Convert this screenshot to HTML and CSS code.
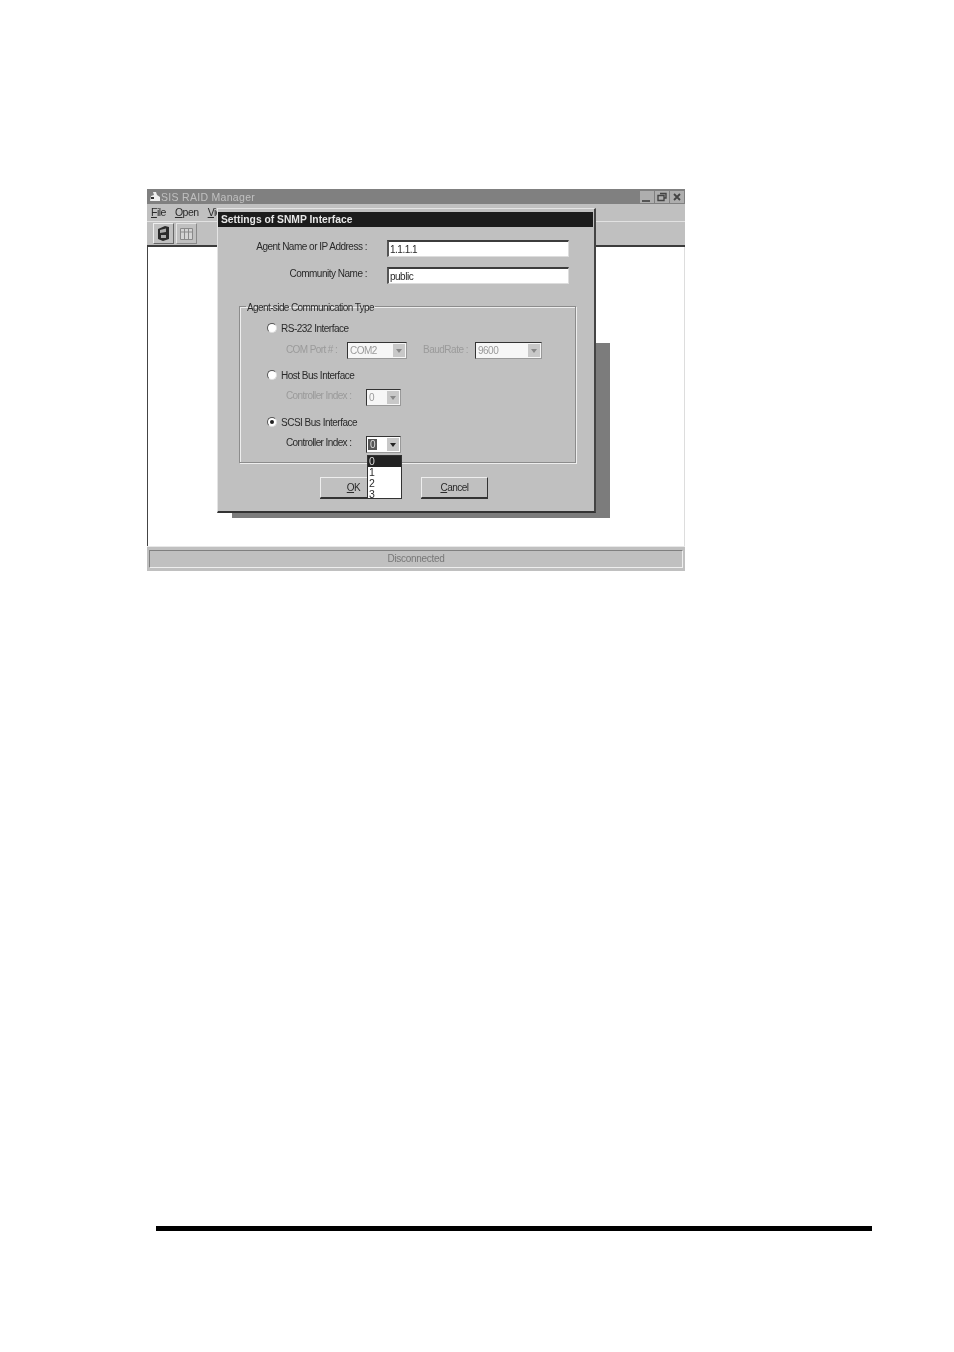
FILE: index.html
```html
<!DOCTYPE html>
<html lang="en">
<head>
    <meta charset="UTF-8">
    <title>SIS RAID Manager</title>
    <link rel="stylesheet" href="styles.css">
</head>
<body>
    <div class="window">
        <div class="titlebar">
            <svg class="app-icon" width="12" height="11" viewBox="0 0 12 11">
                <path d="M1 10 L2 5 L5 4 L4 1 L7 1 L8 4 L11 6 L11 10 Z" fill="#f0f0f0"/>
                <path d="M2 6 H5 V8 H2 Z" fill="#333"/>
            </svg>
            <span class="app-name">SIS RAID Manager</span>
            <div class="win-buttons">
                <div class="win-button">
                    <svg width="14" height="12" viewBox="0 0 14 12"><path d="M2 9 H10 V11 H2 Z" fill="#555"/></svg>
                </div>
                <div class="win-button">
                    <svg width="14" height="12" viewBox="0 0 14 12"><path d="M5 2.5 H11 V7 H9 M3 4.5 H9 V9.5 H3 Z" fill="none" stroke="#444" stroke-width="1.4"/></svg>
                </div>
                <div class="win-button">
                    <svg width="14" height="12" viewBox="0 0 14 12"><path d="M4 3 L10 9 M10 3 L4 9" stroke="#444" stroke-width="1.8"/></svg>
                </div>
            </div>
        </div>
        <div class="menubar">
            <span><u>F</u>ile</span>
            <span><u>O</u>pen</span>
            <span><u>V</u>iew</span>
        </div>
        <div class="toolbar">
            <div class="tool-button">
                <svg width="17" height="17" viewBox="0 0 17 17">
                    <path d="M3 4 L10 1 L14 2 V14 L8 16 L3 14 Z" fill="#2a2a2a"/>
                    <path d="M5 5 L11 3.5 V7 L5 8 Z M6 10 H11 V13 H6 Z" fill="#aaa"/>
                </svg>
            </div>
            <div class="tool-button light">
                <svg width="15" height="14" viewBox="0 0 15 14">
                    <path d="M1.5 1.5 H13.5 V12.5 H1.5 Z M5.5 1.5 V12.5 M9.5 1.5 V12.5 M1.5 5 H13.5" fill="#d4d4d4" stroke="#8a8a8a"/>
                </svg>
            </div>
        </div>
        <div class="client"></div>
        <div class="statusbar">
            <div class="status-panel">Disconnected</div>
        </div>

        <div class="dialog-shadow"></div>
        <div class="dialog">
            <div class="dialog-title">Settings of SNMP Interface</div>

            <div class="fields">
                <label>Agent Name or IP Address :</label>
                <div class="textbox">1.1.1.1</div>
                <label>Community Name :</label>
                <div class="textbox">public</div>
            </div>

            <fieldset class="group">
                <legend>Agent-side Communication Type</legend>

                <div class="option"><span class="radio"></span>RS-232 Interface</div>
                <div class="sub-row disabled">
                    <span class="com-label">COM Port # :</span>
                    <div class="combo combo-com"><span>COM2</span><span class="arrow"></span></div>
                    <span class="baud-label">BaudRate :</span>
                    <div class="combo combo-baud"><span>9600</span><span class="arrow"></span></div>
                </div>

                <div class="option"><span class="radio"></span>Host Bus Interface</div>
                <div class="sub-row disabled">
                    <span class="index-label">Controller Index :</span>
                    <div class="combo combo-index"><span>0</span><span class="arrow"></span></div>
                </div>

                <div class="option"><span class="radio checked"></span>SCSI Bus Interface</div>
                <div class="sub-row">
                    <span class="index-label">Controller Index :</span>
                    <div class="combo combo-index">
                        <span class="focused">0</span><span class="arrow"></span>
                        <ul class="dropdown">
                            <li class="selected">0</li>
                            <li>1</li>
                            <li>2</li>
                            <li>3</li>
                        </ul>
                    </div>
                </div>
            </fieldset>

            <div class="actions">
                <div class="button"><span><u>O</u>K</span></div>
                <div class="button"><span><u>C</u>ancel</span></div>
            </div>
        </div>
    </div>

    <div class="page-rule"></div>
</body>
</html>
```

FILE: styles.css
```css
html, body {
    height: 100%;
    overflow: hidden;
}

body {
    font-family: "Liberation Sans", Arial, sans-serif;
    font-size: 10px;
    letter-spacing: -0.5px;
    margin: 0;
    padding: 189px 0 0 147px;
    box-sizing: border-box;
    background-color: #fff;
    color: #2a2a2a;
}

u {
    text-underline-offset: 1px;
}

.window {
    position: relative;
    display: flex;
    flex-direction: column;
    width: 538px;
    height: 382px;
    background-color: #c0c0c0;
    filter: blur(0.7px);
}

.titlebar {
    display: flex;
    align-items: center;
    height: 15px;
    padding-left: 2px;
    background-color: #808080;
    color: #c0c0c0;
    flex: none;
}

.app-name {
    font-size: 10.5px;
    letter-spacing: 0.3px;
}

.win-buttons {
    display: flex;
    gap: 1px;
    margin-left: auto;
    margin-right: 1px;
}

.win-button {
    display: flex;
    width: 14px;
    height: 12px;
    background-color: #aeaeae;
}

.menubar {
    display: flex;
    align-items: center;
    height: 18px;
    padding: 0 0 2px 4px;
    gap: 9px;
    font-size: 10.5px;
    flex: none;
    border-bottom: 1px solid #e2e2e2;
    box-sizing: border-box;
}

.toolbar {
    display: flex;
    align-items: center;
    gap: 2px;
    height: 25px;
    padding-left: 6px;
    box-sizing: border-box;
    border-bottom: 2px solid #3c3c3c;
    flex: none;
}

.tool-button {
    display: flex;
    align-items: center;
    justify-content: center;
    width: 21px;
    height: 21px;
    box-sizing: border-box;
    border: 1px solid;
    border-color: #eee #666 #666 #eee;
}

.tool-button.light {
    border-color: #e4e4e4 #8a8a8a #8a8a8a #e4e4e4;
}

.client {
    flex: 1;
    background-color: #fff;
    border-left: 1px solid #444;
    border-right: 1px solid #ddd;
}

.statusbar {
    height: 25px;
    padding: 3px 2px;
    box-sizing: border-box;
    border-top: 1px solid #e8e8e8;
    flex: none;
}

.status-panel {
    height: 18px;
    line-height: 16px;
    letter-spacing: -0.3px;
    text-align: center;
    color: #777;
    border: 1px solid;
    border-color: #808080 #eee #eee #808080;
    box-sizing: border-box;
}

.dialog-shadow {
    position: absolute;
    left: 85px;
    top: 154px;
    width: 378px;
    height: 175px;
    background-color: #7c7c7c;
}

.dialog {
    position: absolute;
    left: 70px;
    top: 19px;
    width: 379px;
    height: 305px;
    box-sizing: border-box;
    padding-top: 3px;
    background-color: #c0c0c0;
    border-top: 1px solid #e4e4e4;
    border-left: 1px solid #e4e4e4;
    border-right: 2px solid #444;
    border-bottom: 2px solid #333;
}

.dialog-title {
    height: 15px;
    line-height: 15px;
    margin-right: 1px;
    padding-left: 3px;
    background-color: #1c1c1c;
    color: #e6e6e6;
    font-weight: bold;
    font-size: 10.3px;
    letter-spacing: 0;
}

.fields {
    display: grid;
    grid-template-columns: 149px 182px;
    column-gap: 20px;
    row-gap: 10px;
    margin-top: 13px;
}

.fields label {
    text-align: right;
    line-height: 13px;
}

.textbox {
    height: 17px;
    line-height: 15px;
    padding-left: 1px;
    box-sizing: border-box;
    background-color: #fff;
    border-top: 2px solid #3c3c3c;
    border-left: 2px solid #555;
    border-right: 1px solid #ddd;
    border-bottom: 1px solid #ddd;
}

.group {
    position: relative;
    width: 337px;
    height: 163px;
    margin: 16px 0 0 21px;
    padding: 9px 0 0 6px;
    box-sizing: border-box;
    border: 1px solid #8c8c8c;
    box-shadow: 1px 1px 0 #eee, inset 1px 1px 0 #eee;
}

.group legend {
    position: relative;
    top: 2px;
    margin: 0;
    padding: 0 1px;
    line-height: 12px;
    letter-spacing: -0.6px;
}

.option {
    display: flex;
    align-items: center;
    height: 14px;
    margin-left: 21px;
}

.radio {
    position: relative;
    width: 10px;
    height: 10px;
    margin-right: 4px;
    box-sizing: border-box;
    background-color: #fff;
    border-radius: 50%;
    border: 1px solid;
    border-color: #555 #ddd #ddd #555;
}

.radio.checked::after {
    content: "";
    position: absolute;
    left: 2px;
    top: 2px;
    width: 4px;
    height: 4px;
    background-color: #222;
    border-radius: 50%;
}

.sub-row {
    display: flex;
    align-items: center;
    height: 17px;
    margin: 7px 0 9px 40px;
}

.sub-row.disabled {
    color: #9a9a9a;
}

.index-label {
    width: 80px;
    margin-bottom: 4px;
    letter-spacing: -0.6px;
}

.com-label {
    width: 61px;
    margin-bottom: 2px;
    letter-spacing: -0.6px;
}

.baud-label {
    width: 52px;
    margin-left: 16px;
    margin-bottom: 2px;
}

.combo {
    position: relative;
    display: flex;
    align-items: center;
    height: 17px;
    padding-left: 2px;
    box-sizing: border-box;
    background-color: #fff;
    border: 1px solid;
    border-color: #333 #999 #999 #333;
}

.combo-com {
    width: 60px;
}

.combo-baud {
    width: 67px;
}

.combo-index {
    width: 35px;
}

.disabled .combo {
    background-color: #f6f6f6;
}

.arrow {
    position: absolute;
    right: 1px;
    top: 1px;
    bottom: 1px;
    width: 12px;
    background-color: #c8c8c8;
}

.arrow::after {
    content: "";
    position: absolute;
    left: 3px;
    top: 5px;
    border-left: 3px solid transparent;
    border-right: 3px solid transparent;
    border-top: 4px solid #222;
}

.disabled .arrow::after {
    border-top-color: #888;
}

.focused {
    background-color: #555;
    color: #ddd;
    padding: 0 2px;
    margin-left: -1px;
}

.dropdown {
    position: absolute;
    left: 0;
    top: 18px;
    width: 35px;
    height: 44px;
    margin: 0;
    padding: 0;
    list-style: none;
    box-sizing: border-box;
    background-color: #fff;
    border: 1px solid #333;
    font-size: 10.5px;
    line-height: 11px;
    z-index: 1;
}

.dropdown li {
    height: 11px;
    padding-left: 1px;
}

.dropdown .selected {
    background-color: #222;
    color: #ddd;
}

.actions {
    display: flex;
    gap: 34px;
    margin: 14px 0 0 102px;
}

.button {
    width: 67px;
    height: 21px;
    line-height: 19px;
    text-align: center;
    box-sizing: border-box;
    border: 1px solid;
    border-color: #eee #333 #333 #eee;
    box-shadow: 0 1px 0 #333;
}

.page-rule {
    width: 716px;
    height: 5px;
    margin: 655px 0 0 9px;
    background-color: #000;
}
```
